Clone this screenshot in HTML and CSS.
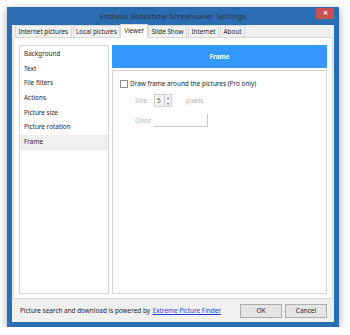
FILE: index.html
```html
<!DOCTYPE html>
<html lang="en">
<head>
    <meta charset="UTF-8">
    <title>Endless Slideshow Screensaver Settings</title>
    <link rel="stylesheet" href="styles.css">
</head>
<body>
    <div class="window">
        <div class="titlebar">
            <span></span>
            <span class="title">Endless Slideshow Screensaver Settings</span>
            <span class="close-wrap"><button class="close">&#x2715;</button></span>
        </div>
        <div class="client">
            <div class="tabs">
                <div class="tab">Internet pictures</div>
                <div class="tab">Local pictures</div>
                <div class="tab active">Viewer</div>
                <div class="tab">Slide Show</div>
                <div class="tab">Internet</div>
                <div class="tab">About</div>
            </div>
            <div class="tab-panel">
                <ul class="pages">
                    <li>Background</li>
                    <li>Text</li>
                    <li>File filters</li>
                    <li>Actions</li>
                    <li>Picture size</li>
                    <li>Picture rotation</li>
                    <li class="selected">Frame</li>
                </ul>
                <div class="page">
                    <div class="page-header">Frame</div>
                    <div class="page-body">
                        <label class="check"><span class="box"></span>Draw frame around the pictures (Pro only)</label>
                        <div class="row">
                            <span class="lbl">Size</span>
                            <span class="spin"><span class="val">5</span><span class="arrows"><i>&#x25B4;</i><i>&#x25BE;</i></span></span>
                            <span class="unit">pixels</span>
                        </div>
                        <div class="row">
                            <span class="lbl">Color</span>
                            <span class="color-box"></span>
                        </div>
                    </div>
                </div>
            </div>
            <div class="footer">
                <span class="powered">Picture search and download is powered by <a href="#">Extreme Picture Finder</a></span>
                <button class="btn">OK</button>
                <button class="btn">Cancel</button>
            </div>
        </div>
    </div>
</body>
</html>
```

FILE: styles.css
```css
body {
    margin: 0;
    background-color: #fff;
    font-family: "Noto Sans", "Open Sans", sans-serif;
    font-size: 6.4px;
    color: #1e1e1e;
}

.window {
    margin: 7px 0 0 7px;
    width: 322px;
    height: 315px;
    padding: 0 5px 5px 5px;
    background-color: #2b6db3;
    box-shadow: 0 2px 8px rgba(0, 0, 0, 0.35);
    display: flex;
    flex-direction: column;
}

.titlebar {
    height: 18px;
    display: grid;
    grid-template-columns: 1fr auto 1fr;
    align-items: center;
}

.title {
    font-size: 7.9px;
    color: #333;
}

.close-wrap {
    display: flex;
    justify-content: flex-end;
    align-self: start;
    margin-top: 1px;
}

.close {
    width: 18px;
    height: 11px;
    border: none;
    padding: 0;
    background-color: #c75050;
    color: #fff;
    font-size: 6px;
    font-weight: bold;
    line-height: 11px;
}

.client {
    flex: 1;
    background-color: #f0f0f0;
    display: flex;
    flex-direction: column;
    padding: 0 1px;
}

.tabs {
    display: flex;
    align-items: flex-end;
    height: 12px;
    padding-left: 2px;
    font-size: 6.3px;
}

.tab {
    height: 11px;
    line-height: 11px;
    padding: 0 2.5px;
    margin-right: 1px;
    border: 1px solid #d9d9d9;
    border-bottom: none;
    background-color: #f0f0f0;
    white-space: nowrap;
}

.tab.active {
    height: 13px;
    margin: 0 0 -1px -1px;
    padding: 0 3px;
    background-color: #fff;
    position: relative;
}

.tab-panel {
    height: 249px;
    background-color: #fff;
    border: 1px solid #d9d9d9;
    display: flex;
    gap: 3px;
    padding: 7px 5px 4px 5px;
}

.pages {
    width: 88px;
    margin: 0;
    padding: 1px 0 0 0;
    list-style: none;
    border: 1px solid #d4d4d4;
}

.pages li {
    height: 14.7px;
    line-height: 14.7px;
    padding-left: 4px;
}

.pages li.selected {
    background-color: #f0f0f0;
}

.page {
    flex: 1;
    display: flex;
    flex-direction: column;
    gap: 2px;
}

.page-header {
    height: 23px;
    line-height: 23px;
    background-color: #3399ff;
    color: #fff;
    font-weight: bold;
    text-align: center;
}

.page-body {
    flex: 1;
    border: 1px solid #d4d4d4;
    padding: 8px 7px;
}

.check {
    display: flex;
    align-items: center;
    gap: 2px;
}

.box {
    width: 6px;
    height: 6px;
    border: 1px solid #8a8a8a;
    background-color: #fff;
}

.row {
    display: flex;
    align-items: center;
    margin-top: 6px;
    padding-left: 15px;
    color: #b0b0b0;
}

.lbl {
    width: 19px;
}

.spin {
    display: flex;
    width: 16px;
    height: 11px;
    border: 1px solid #d0d0d0;
    background-color: #f4f4f4;
    color: #555;
}

.val {
    flex: 1;
    padding-left: 2px;
    line-height: 11px;
}

.arrows {
    width: 6px;
    display: flex;
    flex-direction: column;
    border-left: 1px solid #d0d0d0;
    font-size: 4px;
    line-height: 5.5px;
    text-align: center;
}

.arrows i {
    font-style: normal;
}

.unit {
    margin-left: 14px;
}

.color-box {
    width: 53px;
    height: 12px;
    border-right: 1px solid #c8c8c8;
    border-bottom: 1px solid #c8c8c8;
}

.row + .row {
    margin-top: 7px;
}

.footer {
    flex: 1;
    display: flex;
    align-items: center;
    padding: 0 6px 0 7px;
    gap: 3px;
}

.powered {
    flex: 1;
    white-space: nowrap;
}

.powered a {
    color: #1a3fd6;
    margin-left: 1px;
}

.btn {
    width: 42px;
    height: 14px;
    padding: 0;
    font-family: inherit;
    font-size: 6.6px;
    color: #1e1e1e;
    background-color: #e5e5e5;
    border: 1px solid #acacac;
}
```
